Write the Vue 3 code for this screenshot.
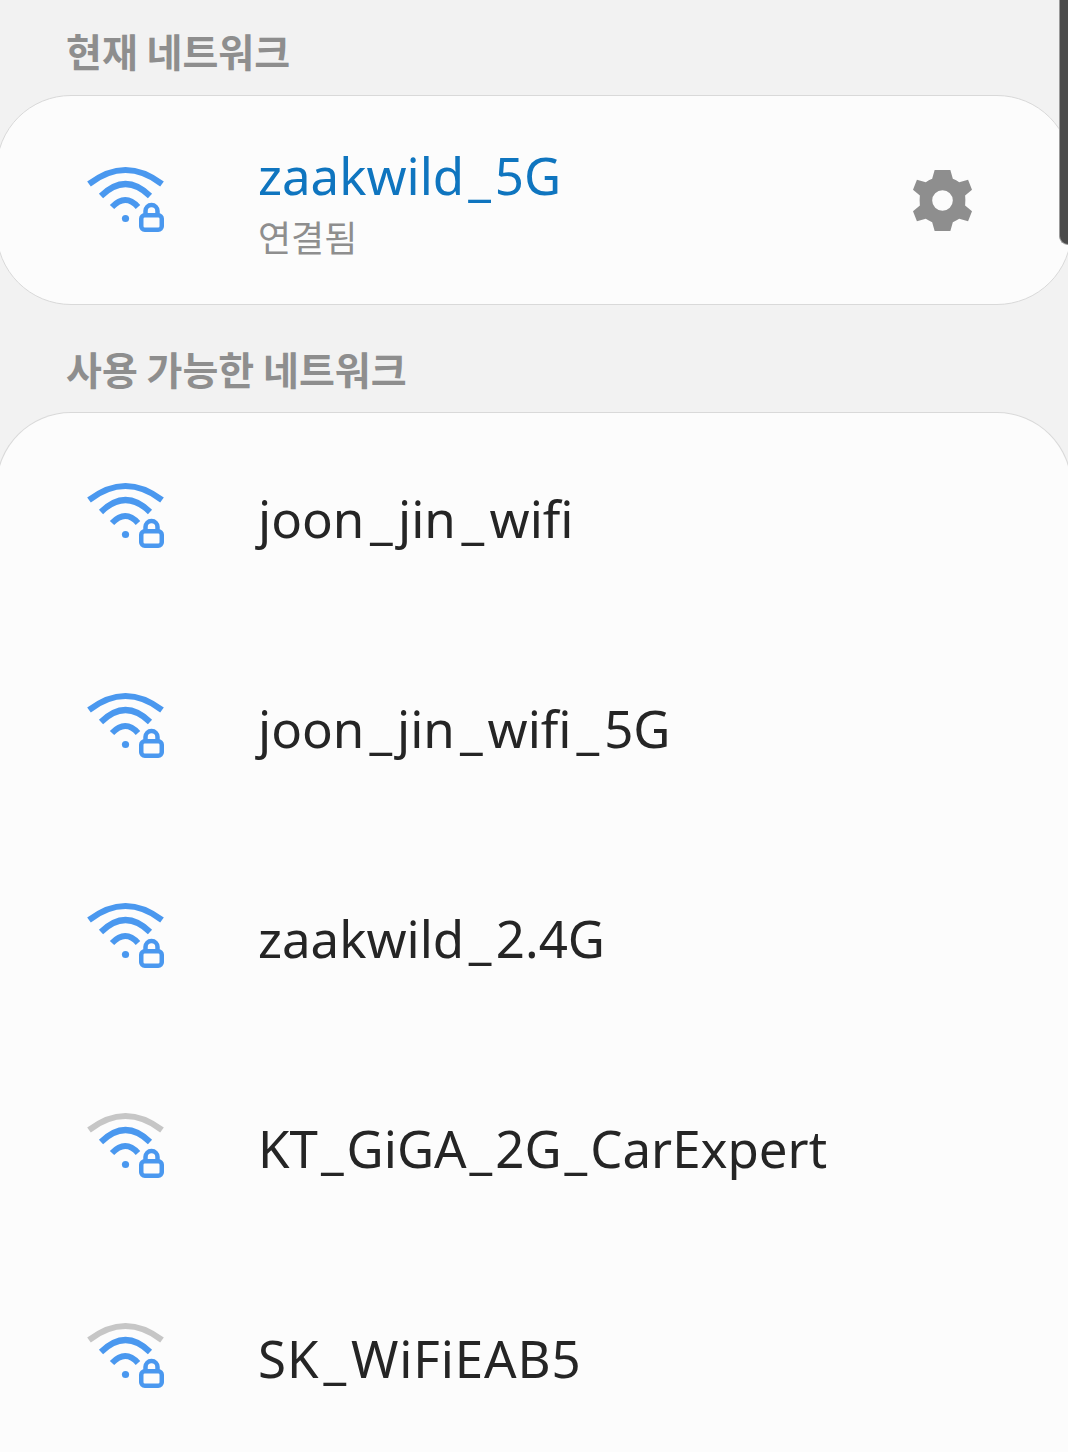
<script setup>
const networks = [
  { name: 'joon_jin_wifi', weak: false, gap: 5.5, ls: 0 },
  { name: 'joon_jin_wifi_5G', weak: false, gap: 5, ls: 0 },
  { name: 'zaakwild_2.4G', weak: false, gap: 4.5, ls: 0 },
  { name: 'KT_GiGA_2G_CarExpert', weak: true, gap: 3, ls: 0 },
  { name: 'SK_WiFiEAB5', weak: true, gap: 4, ls: 0.9 }
]
</script>

<template>
  <div class="page">
    <div class="scrollbar"></div>
    <h2 class="title title-first">현재 네트워크</h2>
    <section class="card">
      <div class="row">
        <svg class="wifi" viewBox="0 0 84 70" width="84" height="70">
          <path class="arc" d="M5 21 Q41.5 -7 78 21" />
          <path class="arc" d="M17 33 Q41.5 9 66 33" />
          <path class="arc" d="M28 44 Q41.5 30 54 44" />
          <circle class="fill" cx="41.5" cy="55.5" r="3.6" />
          <path class="lock" d="M61.5 52 V48 A6 6 0 0 1 73.5 48 V52" />
          <rect class="lock" x="57.25" y="52.25" width="20.5" height="14.5" rx="3.5" />
        </svg>
        <div class="text">
          <div class="name active">zaakwild<span class="us">_</span>5G</div>
          <div class="status">연결됨</div>
        </div>
        <svg class="gear" viewBox="0 0 60 62" width="59" height="61">
          <path fill-rule="evenodd" d="M22 0 H38 L40.5 9 Q44 10.5 47 12.5 L56 10 L60 20 L53 26 Q53.6 31 53 36 L60 42 L56 52 L47 49.5 Q44 51.5 40.5 53 L38 62 H22 L19.5 53 Q16 51.5 13 49.5 L4 52 L0 42 L7 36 Q6.4 31 7 26 L0 20 L4 10 L13 12.5 Q16 10.5 19.5 9 Z M30 20.5 A10.5 10.5 0 1 0 30 41.5 A10.5 10.5 0 1 0 30 20.5 Z" />
        </svg>
      </div>
    </section>
    <h2 class="title title-second">사용 가능한 네트워크</h2>
    <section class="card list">
      <div v-for="n in networks" :key="n.name" class="row">
        <svg class="wifi" viewBox="0 0 84 70" width="84" height="70">
          <path class="arc" :class="{ weak: n.weak }" d="M5 21 Q41.5 -7 78 21" />
          <path class="arc" d="M17 33 Q41.5 9 66 33" />
          <path class="arc" d="M28 44 Q41.5 30 54 44" />
          <circle class="fill" cx="41.5" cy="55.5" r="3.6" />
          <path class="lock" d="M61.5 52 V48 A6 6 0 0 1 73.5 48 V52" />
          <rect class="lock" x="57.25" y="52.25" width="20.5" height="14.5" rx="3.5" />
        </svg>
        <div class="text">
          <div class="name" :style="{ letterSpacing: n.ls + 'px' }">
            <template v-for="(part, i) in n.name.split('_')" :key="i"><span v-if="i" class="us" :style="{ margin: '0 ' + n.gap + 'px' }">_</span>{{ part }}</template>
          </div>
        </div>
      </div>
    </section>
  </div>
</template>

<style scoped>
.page {
  position: relative;
  width: 1068px;
  height: 1452px;
  overflow: hidden;
  background: #f2f2f2;
  font-family: "Noto Sans", "Noto Sans CJK KR", sans-serif;
}
.scrollbar {
  position: absolute;
  top: 0;
  right: 0;
  width: 9px;
  height: 245px;
  z-index: 2;
  background: #4b4b4b;
  border-left: 1px solid #9a9a9a;
  border-bottom: 1px solid #9a9a9a;
  border-bottom-left-radius: 10px;
  box-sizing: border-box;
}
.title {
  margin: 0;
  padding-left: 66px;
  font-family: "Noto Sans CJK KR", sans-serif;
  font-size: 39px;
  line-height: 50px;
  font-weight: 700;
  color: #8e8e8e;
}
.title-first { padding-top: 25px; height: 95px; box-sizing: border-box; }
.title-second { padding-top: 38px; height: 107px; box-sizing: border-box; }
.card {
  margin: 0 -4px;
  background: #fcfcfc;
  border: 1px solid #d9d9d9;
  border-radius: 75px;
  box-sizing: border-box;
}
.list {
  border-bottom: 0;
  border-bottom-left-radius: 0;
  border-bottom-right-radius: 0;
}
.row {
  height: 208px;
  display: flex;
  align-items: center;
  padding-left: 87px;
  padding-right: 99px;
}
.list .row { height: 210px; }
.wifi { flex: none; margin-top: -4px; }
.list .wifi { margin-top: -8px; }
.arc {
  fill: none;
  stroke: #4a98ef;
  stroke-width: 6;
}
.arc.weak { stroke: #c6c6c6; }
.fill { fill: #4a98ef; }
.lock {
  fill: none;
  stroke: #4a98ef;
  stroke-width: 4.5;
}
.text {
  flex: 1;
  margin-left: 90px;
}
.name {
  font-size: 51px;
  line-height: 70px;
  color: #252525;
}
.name.active { color: #0f75bf; }
.us { margin: 0 4px; }
.status {
  margin-top: 2px;
  font-family: "Noto Sans CJK KR", sans-serif;
  font-size: 36px;
  line-height: 48px;
  color: #8e8e8e;
}
.gear { flex: none; fill: #8e8e8e; }
</style>
